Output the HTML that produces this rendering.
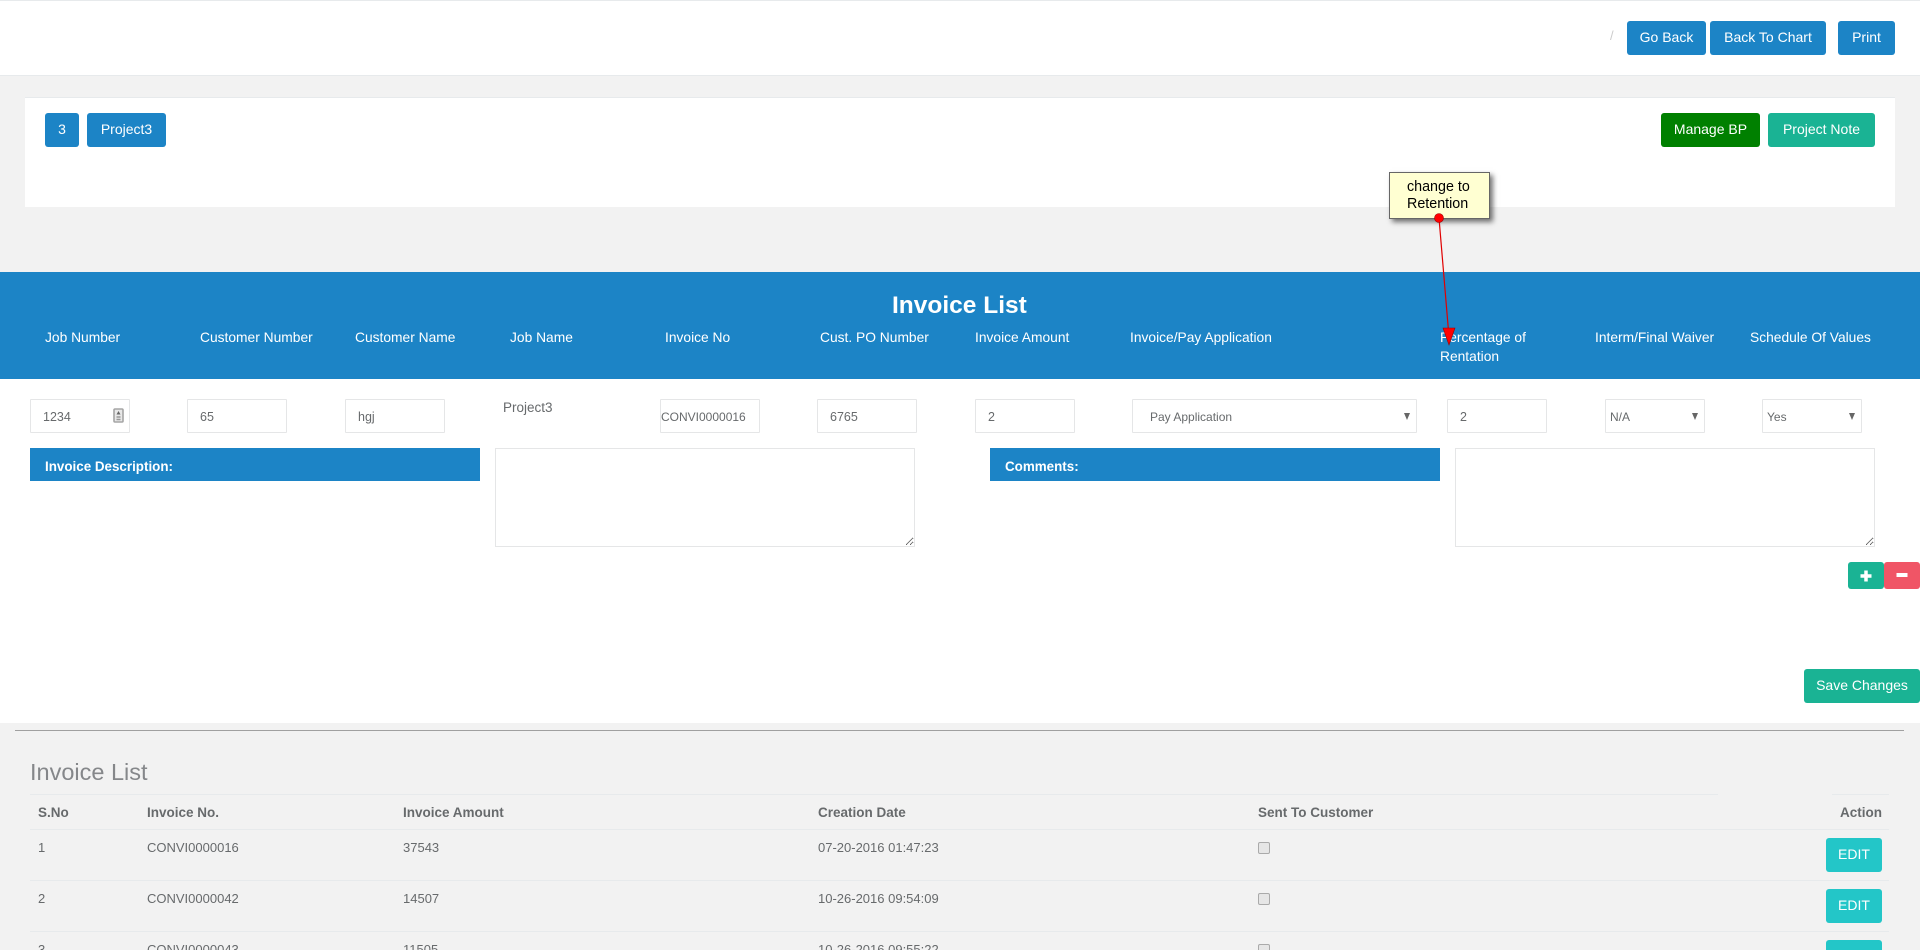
<!DOCTYPE html>
<html lang="en"><head><meta charset="utf-8"><title>Invoice List</title>
<style>
*{box-sizing:border-box}
html,body{margin:0;padding:0;width:1920px;height:950px;overflow:hidden;background:#f2f2f2}
body{position:relative;font-family:"Liberation Sans",sans-serif;font-size:13px;color:#676a6c}
.a{position:absolute}
.t{position:absolute;white-space:nowrap;line-height:20px}
.btn{position:absolute;height:34px;line-height:33px;border-radius:3px;color:#fff;font-size:14px;text-align:center;background:#1c84c6;white-space:nowrap}
.g{background:#1ab394}
.lab{position:absolute;top:328px;font-size:13.8px;line-height:20px;color:#fff;white-space:nowrap}
.f{position:absolute;top:399px;width:100px;height:34px;border:1px solid #e5e6e7;border-radius:1px;background:#fff;color:#676a6c;font:12.5px "Liberation Sans",sans-serif;padding:1px 0 0 12px;margin:0;outline:0;appearance:none;-webkit-appearance:none}
.arr{position:absolute;top:413px;width:0;height:0;border-left:3.5px solid transparent;border-right:3.5px solid transparent;border-top:7px solid #666}
.bar{position:absolute;top:448px;height:33px;width:450px;background:#1c84c6;color:#fff;font-weight:bold;font-size:13.4px;line-height:38px;padding-left:15px}
textarea{position:absolute;top:448px;width:420px;height:99px;border:1px solid #e5e6e7;background:#fff;margin:0;padding:0;outline:0}
.h{position:absolute;top:803px;font-weight:bold;font-size:13.5px;line-height:20px;white-space:nowrap}
.c{position:absolute;font-size:13px;line-height:20px;white-space:nowrap}
.ln{position:absolute;height:1px;background:#e7eaec}
.edit{position:absolute;left:1826px;width:56px;height:34px;line-height:33px;border-radius:3px;background:#23c6c8;color:#fff;font-size:14px;text-align:center}
input[type=checkbox]{position:absolute;left:1258px;width:12px;height:12px;margin:0;appearance:none;-webkit-appearance:none;background:#e6e6e6;border:1px solid #aaa;border-radius:2px}
</style></head><body>

<div class="a" style="left:0;top:0;width:1920px;height:76px;background:#fff;border-top:1px solid #e7eaec;border-bottom:1px solid #e7eaec"></div>
<div class="t" style="left:1610px;top:26px;color:#ccc;font-size:13px">/</div>
<div class="btn" style="left:1627px;top:21px;width:79px">Go Back</div>
<div class="btn" style="left:1710px;top:21px;width:116px">Back To Chart</div>
<div class="btn" style="left:1838px;top:21px;width:57px">Print</div>

<div class="a" style="left:25px;top:97px;width:1870px;height:110px;background:#fff;border-top:1px solid #e7eaec"></div>
<div class="btn" style="left:45px;top:113px;width:34px">3</div>
<div class="btn" style="left:87px;top:113px;width:79px">Project3</div>
<div class="btn" style="left:1661px;top:113px;width:99px;background:#008000">Manage BP</div>
<div class="btn g" style="left:1768px;top:113px;width:107px">Project Note</div>

<div class="a" style="left:0;top:272px;width:1920px;height:107px;background:#1c84c6"></div>
<div class="a" style="left:0;top:379px;width:1920px;height:344px;background:#fff"></div>
<div class="t" style="left:892px;top:292px;font-size:24.5px;line-height:28px;font-weight:bold;color:#fff">Invoice List</div>
<div class="lab" style="left:45px">Job Number</div>
<div class="lab" style="left:200px">Customer Number</div>
<div class="lab" style="left:355px">Customer Name</div>
<div class="lab" style="left:510px">Job Name</div>
<div class="lab" style="left:665px">Invoice No</div>
<div class="lab" style="left:820px">Cust. PO Number</div>
<div class="lab" style="left:975px">Invoice Amount</div>
<div class="lab" style="left:1130px">Invoice/Pay Application</div>
<div class="lab" style="left:1440px">Percentage of</div>
<div class="lab" style="left:1440px;top:347px">Rentation</div>
<div class="lab" style="left:1595px">Interm/Final Waiver</div>
<div class="lab" style="left:1750px">Schedule Of Values</div>

<input class="f" style="left:30px" value="1234" readonly>
<svg class="a" style="left:113px;top:408px" width="11" height="15" viewBox="0 0 11 15"><rect x="1" y="1" width="9" height="13" rx="1" fill="#e8e8e8" stroke="#a5a5a5" stroke-width="1.6"/><path d="M5.5 3 7.5 6.5H3.5Z" fill="#666"/><path d="M3.5 9h4M3.5 11.5h4" stroke="#999" stroke-width="1.5"/></svg>
<input class="f" style="left:187px" value="65" readonly>
<input class="f" style="left:345px" value="hgj" readonly>
<div class="t" style="left:503px;top:398px;font-size:13.5px">Project3</div>
<input class="f" style="left:660px;padding-left:0;font-size:12px" value="CONVI0000016" readonly>
<input class="f" style="left:817px" value="6765" readonly>
<input class="f" style="left:975px" value="2" readonly>
<select class="f" style="left:1132px;width:285px;padding-left:17px;font-size:12px"><option>Pay Application</option></select>
<div class="arr" style="left:1404px"></div>
<input class="f" style="left:1447px" value="2" readonly>
<select class="f" style="left:1605px;padding-left:4px;font-size:12px"><option>N/A</option></select>
<div class="arr" style="left:1692px"></div>
<select class="f" style="left:1762px;padding-left:4px;font-size:12px"><option>Yes</option></select>
<div class="arr" style="left:1849px"></div>

<div class="bar" style="left:30px">Invoice Description:</div>
<textarea style="left:495px"></textarea>
<div class="bar" style="left:990px">Comments:</div>
<textarea style="left:1455px"></textarea>

<div class="btn g" style="left:1848px;top:562px;width:36px;height:27px"><svg class="a" style="left:12px;top:8px" width="12" height="12"><path d="M6 .5v11M.5 6h11" stroke="#fff" stroke-width="3.5"/></svg></div>
<div class="btn" style="left:1884px;top:562px;width:36px;height:27px;background:#f05566"><svg class="a" style="left:12px;top:7px" width="12" height="12"><path d="M0.500 6h11" stroke="#fff" stroke-width="4"/></svg></div>
<div class="btn g" style="left:1804px;top:669px;width:116px">Save Changes</div>

<div class="a" style="left:15px;top:730px;width:1889px;height:1px;background:#a0a0a0"></div>
<div class="t" style="left:30px;top:759px;font-size:23.5px;line-height:26px;color:#85878a">Invoice List</div>

<div class="ln" style="left:30px;top:794px;width:1688px"></div>
<div class="ln" style="left:1832px;top:794px;width:57px"></div>
<div class="h" style="left:38px">S.No</div>
<div class="h" style="left:147px">Invoice No.</div>
<div class="h" style="left:403px">Invoice Amount</div>
<div class="h" style="left:818px">Creation Date</div>
<div class="h" style="left:1258px">Sent To Customer</div>
<div class="h" style="right:38px">Action</div>
<div class="ln" style="left:30px;top:829px;width:1859px"></div>

<div class="c" style="left:38px;top:838px">1</div>
<div class="c" style="left:147px;top:838px">CONVI0000016</div>
<div class="c" style="left:403px;top:838px">37543</div>
<div class="c" style="left:818px;top:838px">07-20-2016 01:47:23</div>
<input type="checkbox" style="top:842px">
<div class="edit" style="top:838px">EDIT</div>
<div class="ln" style="left:30px;top:880px;width:1859px"></div>

<div class="c" style="left:38px;top:889px">2</div>
<div class="c" style="left:147px;top:889px">CONVI0000042</div>
<div class="c" style="left:403px;top:889px">14507</div>
<div class="c" style="left:818px;top:889px">10-26-2016 09:54:09</div>
<input type="checkbox" style="top:893px">
<div class="edit" style="top:889px">EDIT</div>
<div class="ln" style="left:30px;top:931px;width:1859px"></div>

<div class="c" style="left:38px;top:940px">3</div>
<div class="c" style="left:147px;top:940px">CONVI0000043</div>
<div class="c" style="left:403px;top:940px">11505</div>
<div class="c" style="left:818px;top:940px">10-26-2016 09:55:22</div>
<input type="checkbox" style="top:944px">
<div class="edit" style="top:940px">EDIT</div>

<div class="a" style="left:1389px;top:172px;width:101px;height:47px;background:#ffffd2;border:1px solid #666;box-shadow:3px 3px 5px rgba(0,0,0,.55)"></div>
<div class="t" style="left:1407px;top:179px;font-size:14.3px;line-height:17px;color:#000;white-space:normal;width:80px">change to<br>Retention</div>
<svg class="a" style="left:1420px;top:205px" width="50" height="150" viewBox="0 0 50 150">
<path d="M19 13 28.500 126" stroke="#e00000" stroke-width="1.2" fill="none"/>
<path d="M23 123 35 123 29 140Z" fill="#f00" stroke="#900" stroke-width=".6"/>
<circle cx="19" cy="13" r="4.500" fill="#f00" stroke="#900" stroke-width=".6"/>
</svg>
</body></html>
